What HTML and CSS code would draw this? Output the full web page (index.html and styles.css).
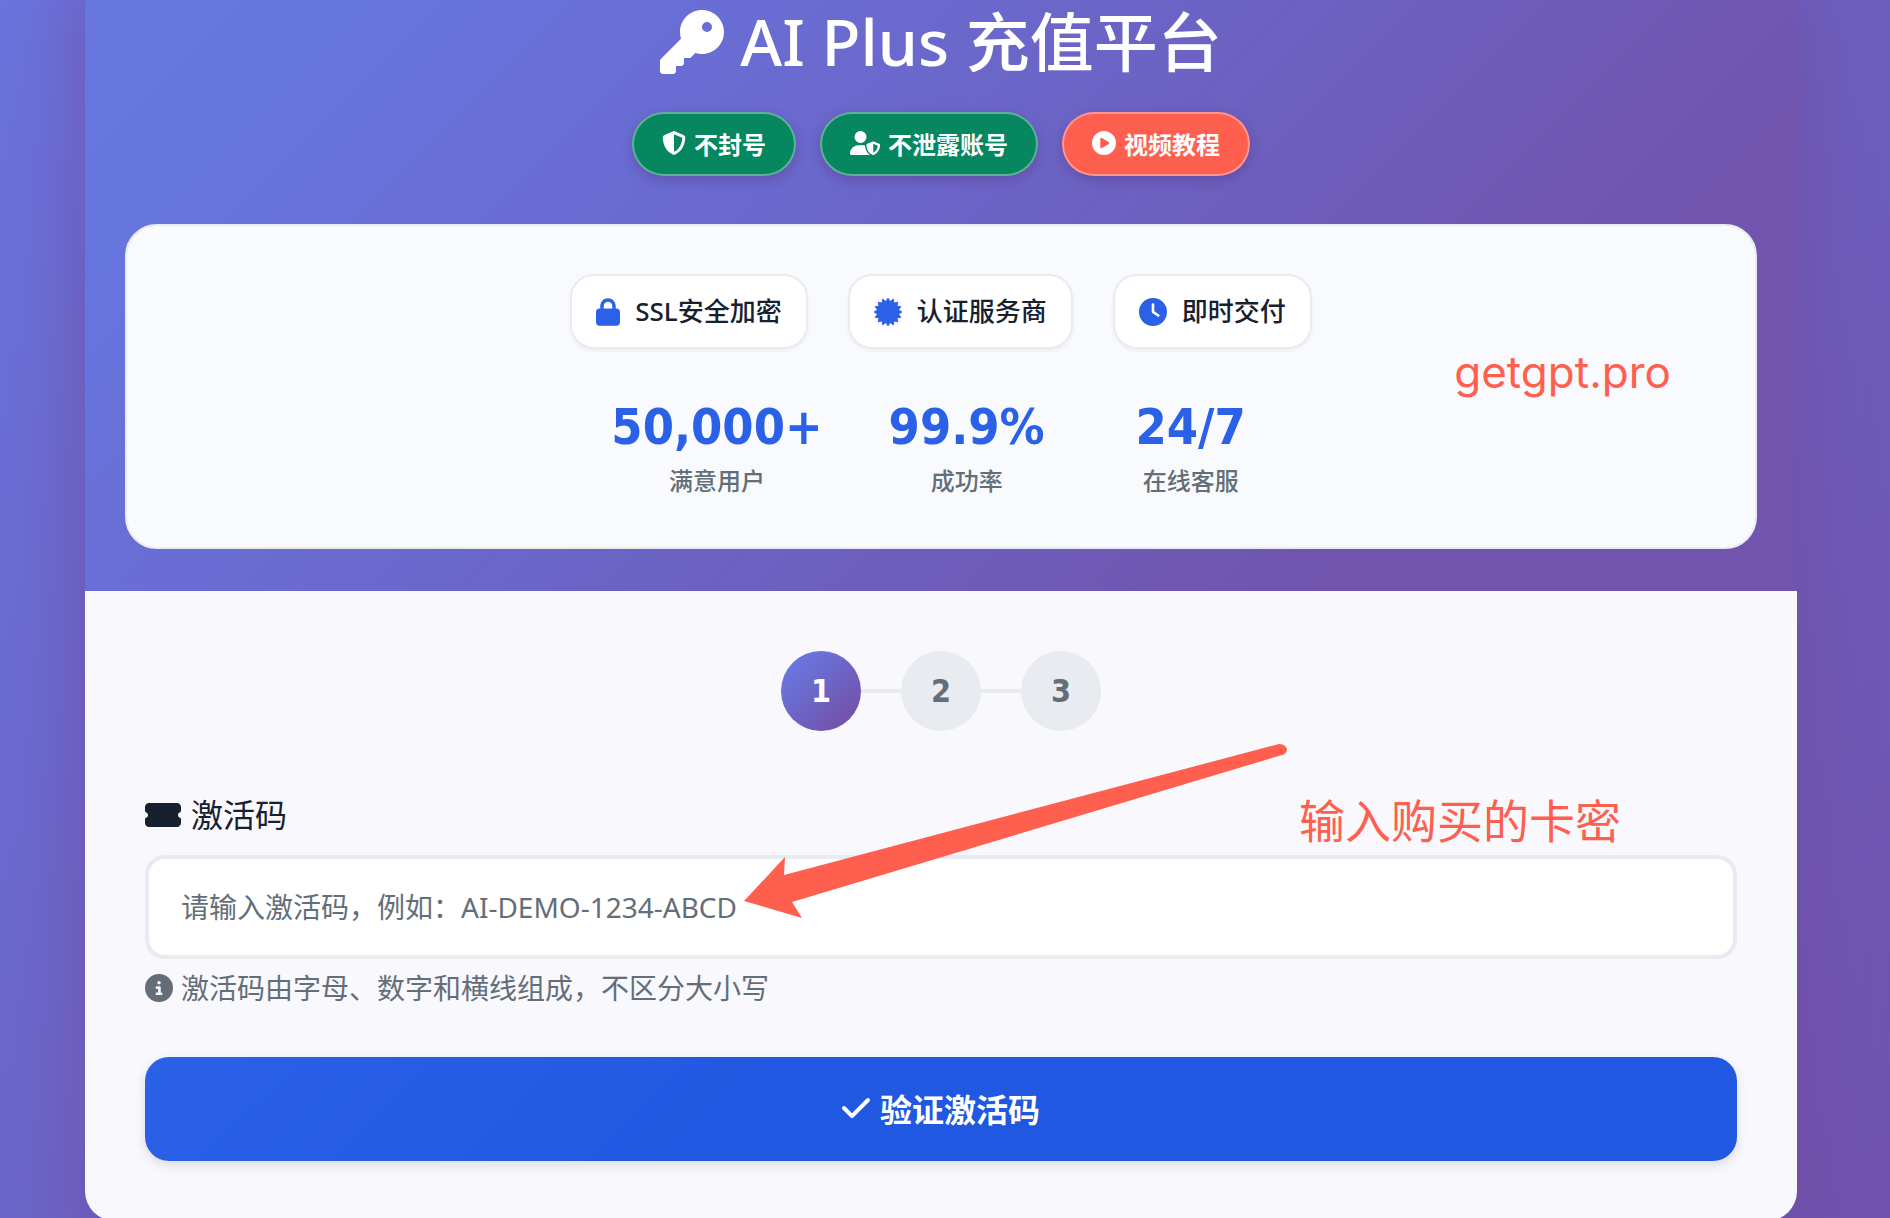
FILE: index.html
```html
<!DOCTYPE html>
<html lang="zh-CN">
<head>
  <meta charset="UTF-8">
  <meta name="viewport" content="width=device-width, initial-scale=1.0">
  <title>AI Plus 充值平台</title>
  <link rel="stylesheet" href="styles.css">
</head>
<body>

  <div class="container">
    <header class="header">
      <h1>
        <svg class="icon-key" viewBox="0 0 512 512"><path d="M336 352c97.200 0 176-78.800 176-176S433.200 0 336 0S160 78.800 160 176c0 18.700 2.900 36.800 8.300 53.700L7 391c-4.500 4.500-7 10.600-7 17v80c0 13.300 10.700 24 24 24h80c13.300 0 24-10.700 24-24V448h40c13.300 0 24-10.700 24-24V384h40c6.400 0 12.500-2.500 17-7l33.300-33.300c16.900 5.400 35 8.300 53.700 8.300zM376 96a40 40 0 1 1 0 80 40 40 0 1 1 0-80z"/></svg>
        <span>AI Plus 充值平台</span>
      </h1>

      <div class="badges">
        <span class="badge">
          <svg class="icon" viewBox="0 0 512 512"><path d="M256 0c4.600 0 9.200 1 13.400 2.900L457.700 82.800c22 9.300 38.400 31 38.300 57.200c-.5 99.200-41.300 280.700-213.600 363.200c-16.700 8-36.100 8-52.800 0C57.300 420.700 16.500 239.200 16 140c-.1-26.200 16.300-47.900 38.300-57.200L242.700 2.900C246.800 1 251.400 0 256 0zm0 66.800V444.800C394 378 431.100 230.100 432 141.400L256 66.800z"/></svg>
          不封号
        </span>
        <span class="badge">
          <svg class="icon-wide" viewBox="0 0 640 512"><path d="M224 256A128 128 0 1 0 224 0a128 128 0 1 0 0 256zm-45.700 48C79.800 304 0 383.800 0 482.300C0 498.700 13.300 512 29.700 512H418.300c1.800 0 3.500-.2 5.300-.5c-76.300-55.100-99.800-141-103.100-200.200c-16.100-4.800-33.100-7.300-50.700-7.300H178.300zm308.800-78.300l-120 48C358 277.400 352 286.200 352 296c0 63.300 25.900 168.800 134.800 214.200c5.900 2.500 12.600 2.500 18.500 0C614.100 464.800 640 359.300 640 296c0-9.800-6-18.600-15.100-22.300l-120-48c-5.700-2.300-12.100-2.300-17.800 0zM591.400 312c-3.900 50.700-27.200 116.700-95.400 149.700V273.800L591.400 312z"/></svg>
          不泄露账号
        </span>
        <a class="badge badge-video" href="#">
          <svg class="icon" viewBox="0 0 512 512"><path d="M0 256a256 256 0 1 1 512 0A256 256 0 1 1 0 256zM188.300 147.100c-7.600 4.200-12.300 12.300-12.300 20.900V344c0 8.700 4.700 16.700 12.300 20.900s16.800 4.100 24.300-.5l144-88c7.100-4.400 11.500-12.100 11.500-20.500s-4.400-16.100-11.500-20.500l-144-88c-7.400-4.500-16.700-4.700-24.300-.5z"/></svg>
          视频教程
        </a>
      </div>

      <div class="trust">
        <div class="trust-row">
          <div class="trust-item">
            <svg class="icon-lock" viewBox="0 0 448 512"><path d="M144 144v48H304V144c0-44.200-35.800-80-80-80s-80 35.800-80 80zM80 192V144C80 64.500 144.500 0 224 0s144 64.500 144 144v48h16c35.300 0 64 28.700 64 64V448c0 35.300-28.700 64-64 64H64c-35.300 0-64-28.700-64-64V256c0-35.300 28.700-64 64-64H80z"/></svg>
            SSL安全加密
          </div>
          <div class="trust-item">
            <svg class="icon-28" viewBox="0 0 512 512"><path d="M256 0L295 62L354 19L366 91L437 75L421 146L493 158L450 217L512 256L450 295L493 354L421 366L437 437L366 421L354 493L295 450L256 512L217 450L158 493L146 421L75 437L91 366L19 354L62 295L0 256L62 217L19 158L91 146L75 75L146 91L158 19L217 62Z" stroke="currentColor" stroke-width="14" stroke-linejoin="round"/></svg>
            认证服务商
          </div>
          <div class="trust-item">
            <svg class="icon-28" viewBox="0 0 512 512"><path d="M256 0a256 256 0 1 1 0 512A256 256 0 1 1 256 0zM232 120V256c0 8 4 15.500 10.700 20l96 64c11 7.400 25.900 4.400 33.300-6.700s4.400-25.900-6.700-33.300L280 243.200V120c0-13.300-10.700-24-24-24s-24 10.700-24 24z"/></svg>
            即时交付
          </div>
        </div>
        <div class="stats">
          <div class="stat"><div class="stat-number">50,000+</div><div class="stat-label">满意用户</div></div>
          <div class="stat"><div class="stat-number">99.9%</div><div class="stat-label">成功率</div></div>
          <div class="stat"><div class="stat-number">24/7</div><div class="stat-label">在线客服</div></div>
        </div>
        <span class="note note-site">getgpt.pro</span>
      </div>
    </header>

    <main class="content">
      <div class="steps">
        <div class="step active">1</div>
        <div class="step-line"></div>
        <div class="step">2</div>
        <div class="step-line"></div>
        <div class="step">3</div>
      </div>

      <form class="code-form">
        <label for="code">
          <svg class="icon-ticket" viewBox="0 0 576 512"><path d="M64 64C28.700 64 0 92.700 0 128v64c0 8.800 7.400 15.700 15.700 18.600C34.500 217.100 48 235 48 256s-13.500 38.900-32.300 45.400C7.400 304.300 0 311.200 0 320v64c0 35.300 28.700 64 64 64H512c35.300 0 64-28.700 64-64V320c0-8.800-7.400-15.700-15.700-18.600C541.500 294.900 528 277 528 256s13.500-38.900 32.300-45.400c8.300-2.900 15.700-9.800 15.700-18.600V128c0-35.300-28.700-64-64-64H64z"/></svg>
          激活码
        </label>
        <input type="text" id="code" placeholder="请输入激活码，例如：AI-DEMO-1234-ABCD">
        <p class="hint">
          <svg class="icon-28" viewBox="0 0 512 512"><path d="M256 512A256 256 0 1 0 256 0a256 256 0 1 0 0 512zM216 336h24V272H216c-13.300 0-24-10.700-24-24s10.700-24 24-24h48c13.300 0 24 10.700 24 24v88h8c13.300 0 24 10.700 24 24s-10.700 24-24 24H216c-13.300 0-24-10.700-24-24s10.700-24 24-24zm40-208a32 32 0 1 1 0 64 32 32 0 1 1 0-64z"/></svg>
          激活码由字母、数字和横线组成，不区分大小写
        </p>
        <button type="button" class="btn-verify">
          <svg class="icon-check" viewBox="0 0 448 512"><path d="M438.600 105.400c12.500 12.500 12.500 32.800 0 45.300l-256 256c-12.500 12.500-32.800 12.500-45.300 0l-128-128c-12.500-12.500-12.500-32.800 0-45.300s32.800-12.500 45.300 0L160 338.700 393.400 105.400c12.500-12.500 32.800-12.500 45.300 0z"/></svg>
          验证激活码
        </button>

        <svg class="arrow" viewBox="0 0 544 174"><path d="M0 157L41 113L40 131L535 0Q541 0 543 5Q543 10 538 11L48 158L58 174Z"/></svg>
        <span class="note note-code">输入购买的卡密</span>
      </form>
    </main>
  </div>

</body>
</html>
```

FILE: styles.css
```css
* {
  box-sizing: border-box;
  margin: 0;
  padding: 0;
}

html {
  overflow: hidden;
}

body {
  font-family: "Noto Sans", "Noto Sans CJK SC", sans-serif;
  background: linear-gradient(135deg, #6974dc 0%, #6d5fbe 60%, #7053ae 100%);
  color: #17202e;
  overflow: hidden;
}

svg {
  fill: currentColor;
  flex-shrink: 0;
  overflow: visible;
}

.container {
  position: relative;
  margin: -60px 93px 0 85px;
  background: #f8f8fd;
  border-radius: 30px;
  box-shadow: 0 40px 80px rgba(112, 75, 162, 0.8);
}

.header {
  padding: 60px 40px 42px;
  background: linear-gradient(135deg, #6776e0 0%, #6775df 15%, #7054ae 80%);
  color: #fff;
}

h1 {
  display: flex;
  justify-content: center;
  align-items: center;
  gap: 16px;
  height: 84px;
  margin-bottom: 28px;
  font-size: 64px;
  font-weight: 500;
  line-height: 84px;
}

.icon-key {
  width: 64px;
  height: 64px;
}

.badges {
  display: flex;
  justify-content: center;
  gap: 24px;
  margin-bottom: 48px;
}

.badge {
  display: flex;
  align-items: center;
  gap: 8px;
  height: 64px;
  padding: 0 28px 2px;
  border: 2px solid rgba(255, 255, 255, 0.35);
  border-radius: 32px;
  background: #07875f;
  box-shadow: 0 4px 12px rgba(80, 50, 130, 0.4);
  color: #fff;
  font-size: 24px;
  font-weight: 700;
  text-decoration: none;
}

.badge-video {
  background: #ff5f4e;
}

.icon {
  width: 24px;
  height: 24px;
}

.icon-wide {
  width: 30px;
  height: 24px;
}

.icon-28 {
  width: 28px;
  height: 28px;
}

.trust {
  position: relative;
  padding: 48px 40px 46px;
  border: 2px solid #e8ebf0;
  border-radius: 32px;
  background: #f9fafd;
  color: #17202e;
}

.trust-row,
.stats {
  display: flex;
  justify-content: center;
}

.trust-row {
  gap: 40px;
  margin-bottom: 44px;
}

.trust-item {
  display: flex;
  align-items: center;
  gap: 15px;
  padding: 16px 24px;
  border: 2px solid #e8ebf0;
  border-radius: 24px;
  background: #fff;
  box-shadow: 0 2px 4px rgba(0, 0, 0, 0.05);
  font-size: 26px;
  font-weight: 500;
  line-height: 39px;
}

.trust-item svg {
  color: #2a61e6;
}

.icon-lock {
  width: 24px;
  height: 28px;
}

.stats {
  gap: 64px;
}

.stat {
  min-width: 160px;
  text-align: center;
}

.stat-number {
  color: #2a61e6;
  font-family: "DejaVu Sans Condensed", "DejaVu Sans", sans-serif;
  font-size: 50px;
  font-weight: 700;
  line-height: 68px;
}

.stat-label {
  color: #636e78;
  font-size: 24px;
  font-weight: 500;
  line-height: 40px;
}

.note {
  position: absolute;
  color: #ff5f4e;
  font-family: Inter, "Noto Sans CJK SC", sans-serif;
  font-size: 46px;
  font-weight: 400;
  line-height: 60px;
  white-space: nowrap;
}

.note-site {
  top: 116px;
  right: 84px;
  font-size: 44px;
}

.content {
  padding: 60px;
}

.steps {
  display: flex;
  justify-content: center;
  align-items: center;
  margin-bottom: 60px;
}

.step {
  width: 80px;
  height: 80px;
  border-radius: 50%;
  background: #e8ebef;
  color: #636e78;
  font-family: "DejaVu Sans Condensed", "DejaVu Sans", sans-serif;
  font-size: 32px;
  font-weight: 700;
  line-height: 80px;
  text-align: center;
}

.step.active {
  background: linear-gradient(135deg, #667eea 0%, #764ba2 100%);
  color: #fff;
}

.step-line {
  width: 40px;
  height: 4px;
  background: #e8ebef;
}

.code-form {
  position: relative;
}

.code-form label {
  display: flex;
  align-items: center;
  gap: 10px;
  margin-bottom: 16px;
  font-size: 32px;
  line-height: 48px;
}

.icon-ticket {
  width: 36px;
  height: 32px;
}

.code-form input {
  display: block;
  width: 100%;
  height: 104px;
  padding: 0 32px;
  border: 4px solid #e8ebef;
  border-radius: 20px;
  background: #fff;
  color: #17202e;
  font-family: inherit;
  font-size: 28px;
}

.code-form input::placeholder {
  color: #636e78;
  opacity: 1;
}

.hint {
  display: flex;
  align-items: center;
  gap: 8px;
  margin: 8px 0 48px;
  color: #636e78;
  font-size: 28px;
  line-height: 42px;
}

.btn-verify {
  display: flex;
  justify-content: center;
  align-items: center;
  gap: 10px;
  width: 100%;
  height: 104px;
  padding-bottom: 2px;
  border: none;
  border-radius: 24px;
  background: linear-gradient(135deg, #2a61e7 0%, #2058e1 40%);
  box-shadow: 0 4px 12px rgba(0, 0, 0, 0.12);
  color: #fff;
  font-family: inherit;
  font-size: 32px;
  font-weight: 700;
}

.icon-check {
  width: 28px;
  height: 32px;
}

/* arrow pointing at the input */
.arrow {
  position: absolute;
  top: -47px;
  left: 599px;
  width: 544px;
  height: 174px;
  color: #ff5f4e;
  pointer-events: none;
}

.note-code {
  top: 0;
  right: 116px;
}
```
